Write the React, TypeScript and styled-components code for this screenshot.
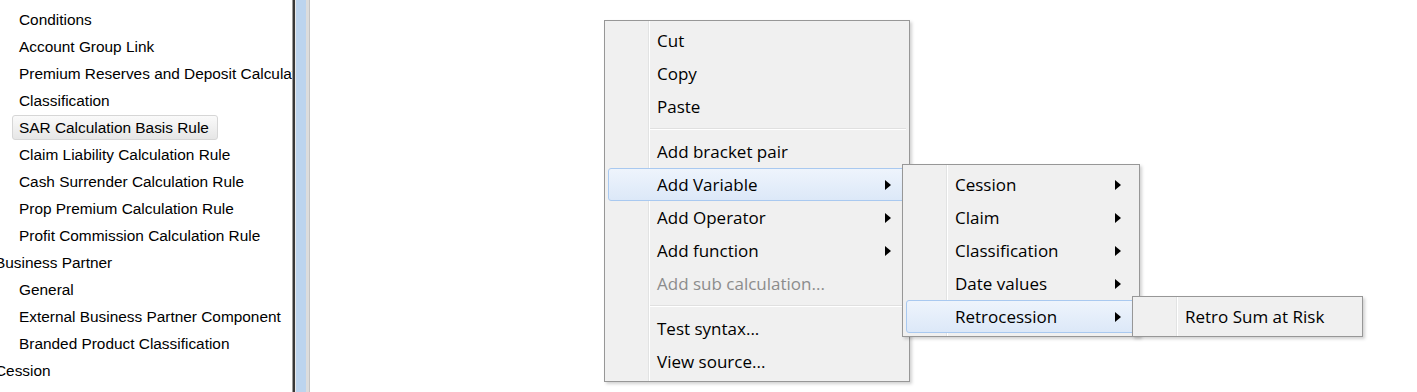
import React from 'react';
import styled, { createGlobalStyle } from 'styled-components';

interface TreeItem {
  label: string;
  level: 0 | 1;
  selected?: boolean;
}

type MenuEntry =
  | { kind: 'item'; label: string; submenu?: boolean; disabled?: boolean; active?: boolean }
  | { kind: 'separator' };

const treeItems: TreeItem[] = [
  { label: 'Conditions', level: 1 },
  { label: 'Account Group Link', level: 1 },
  { label: 'Premium Reserves and Deposit Calculation Rule', level: 1 },
  { label: 'Classification', level: 1 },
  { label: 'SAR Calculation Basis Rule', level: 1, selected: true },
  { label: 'Claim Liability Calculation Rule', level: 1 },
  { label: 'Cash Surrender Calculation Rule', level: 1 },
  { label: 'Prop Premium Calculation Rule', level: 1 },
  { label: 'Profit Commission Calculation Rule', level: 1 },
  { label: 'Business Partner', level: 0 },
  { label: 'General', level: 1 },
  { label: 'External Business Partner Component', level: 1 },
  { label: 'Branded Product Classification', level: 1 },
  { label: 'Cession', level: 0 },
  { label: 'Claim', level: 0 },
];

const editMenu: MenuEntry[] = [
  { kind: 'item', label: 'Cut' },
  { kind: 'item', label: 'Copy' },
  { kind: 'item', label: 'Paste' },
  { kind: 'separator' },
  { kind: 'item', label: 'Add bracket pair' },
  { kind: 'item', label: 'Add Variable', submenu: true, active: true },
  { kind: 'item', label: 'Add Operator', submenu: true },
  { kind: 'item', label: 'Add function', submenu: true },
  { kind: 'item', label: 'Add sub calculation...', disabled: true },
  { kind: 'separator' },
  { kind: 'item', label: 'Test syntax...' },
  { kind: 'item', label: 'View source...' },
];

const variableMenu: MenuEntry[] = [
  { kind: 'item', label: 'Cession', submenu: true },
  { kind: 'item', label: 'Claim', submenu: true },
  { kind: 'item', label: 'Classification', submenu: true },
  { kind: 'item', label: 'Date values', submenu: true },
  { kind: 'item', label: 'Retrocession', submenu: true, active: true },
];

const retroMenu: MenuEntry[] = [{ kind: 'item', label: 'Retro Sum at Risk' }];

const GlobalStyle = createGlobalStyle`
  html, body {
    margin: 0;
    padding: 0;
    background: #ffffff;
    overflow: hidden;
  }
`;

const Page = styled.div`
  position: relative;
  display: flex;
  width: 1417px;
  height: 392px;
  overflow: hidden;
  background: #ffffff;
`;

const TreePanel = styled.div`
  width: 292px;
  flex-shrink: 0;
  overflow: hidden;
  padding-top: 6px;
  font-family: 'Liberation Sans', Arial, sans-serif;
  font-size: 15.4px;
  color: #000000;
`;

// level 0 nodes are scrolled slightly past the left edge, as in the reference
const TreeRow = styled.div<{ $level: number }>`
  height: 27px;
  display: flex;
  align-items: center;
  white-space: nowrap;
  padding-left: ${p => (p.$level === 0 ? 0 : 12)}px;
  margin-left: ${p => (p.$level === 0 ? -12 : 0)}px;
`;

const TreeLabel = styled.span<{ $selected?: boolean }>`
  display: inline-flex;
  align-items: center;
  height: 25px;
  box-sizing: border-box;
  padding: 0 8px 0 6px;
  border: 1px solid ${p => (p.$selected ? '#d6d6d6' : 'transparent')};
  border-radius: 3px;
  background: ${p => (p.$selected ? 'linear-gradient(#fafafa, #e6e6e6)' : 'transparent')};
`;

const Splitter = styled.div`
  width: 18px;
  flex-shrink: 0;
  background: linear-gradient(
    to right,
    #9a9a9a 0 1px,
    #383838 1px 3px,
    #e8e8e8 3px 4px,
    #bcd4ee 4px 14px,
    #dcdcdc 14px 17px,
    #c4c4c4 17px 18px
  );
`;

const Editor = styled.div`
  flex: 1;
  background: #ffffff;
`;

const Menu = styled.div<{ $left: number; $top: number; $width: number }>`
  position: absolute;
  left: ${p => p.$left}px;
  top: ${p => p.$top}px;
  width: ${p => p.$width}px;
  box-sizing: border-box;
  padding: 3px;
  border: 1px solid #979797;
  background:
    linear-gradient(to right, transparent 43px, #e2e3e3 43px 44px, #ffffff 44px 45px, transparent 45px),
    #f0f0f0;
  box-shadow: 2px 2px 3px rgba(0, 0, 0, 0.18);
  font-family: 'Open Sans', 'Noto Sans', sans-serif;
  font-size: 17px;
  color: #000000;
`;

const Item = styled.div<{ $active?: boolean; $disabled?: boolean }>`
  position: relative;
  height: 33px;
  box-sizing: border-box;
  display: flex;
  align-items: center;
  padding-left: 48px;
  padding-right: 14px;
  white-space: nowrap;
  border: 1px solid ${p => (p.$active ? '#a9c9f0' : 'transparent')};
  border-radius: 3px;
  background: ${p => (p.$active ? 'linear-gradient(#eef4fc, #dce8f8)' : 'transparent')};
  color: ${p => (p.$disabled ? '#8c8c8c' : '#000000')};
`;

const ItemText = styled.span`
  flex: 1;
  line-height: 1;
`;

const Arrow = styled.span`
  width: 0;
  height: 0;
  border-top: 5px solid transparent;
  border-bottom: 5px solid transparent;
  border-left: 6px solid #000000;
`;

const Separator = styled.div`
  height: 12px;
  margin-left: 42px;
  display: flex;
  flex-direction: column;
  justify-content: center;

  &::before {
    content: '';
    height: 1px;
    background: #e0e0e0;
  }
  &::after {
    content: '';
    height: 1px;
    background: #ffffff;
  }
`;

const ContextMenu: React.FC<{ entries: MenuEntry[]; left: number; top: number; width: number }> = ({
  entries,
  left,
  top,
  width,
}) => (
  <Menu $left={left} $top={top} $width={width}>
    {entries.map((e, i) =>
      e.kind === 'separator' ? (
        <Separator key={i} />
      ) : (
        <Item key={i} $active={e.active} $disabled={e.disabled}>
          <ItemText>{e.label}</ItemText>
          {e.submenu && <Arrow />}
        </Item>
      )
    )}
  </Menu>
);

const App: React.FC = () => {
  return (
    <>
      <GlobalStyle />
      <Page>
        <TreePanel>
          {treeItems.map(item => (
            <TreeRow key={item.label + item.level} $level={item.level}>
              <TreeLabel $selected={item.selected}>{item.label}</TreeLabel>
            </TreeRow>
          ))}
        </TreePanel>
        <Splitter />
        <Editor />

        {/* popup menus float above the editor */}
        <ContextMenu entries={editMenu} left={604} top={20} width={306} />
        <ContextMenu entries={variableMenu} left={902} top={164} width={238} />
        <ContextMenu entries={retroMenu} left={1132} top={296} width={231} />
      </Page>
    </>
  );
};

export default App;
